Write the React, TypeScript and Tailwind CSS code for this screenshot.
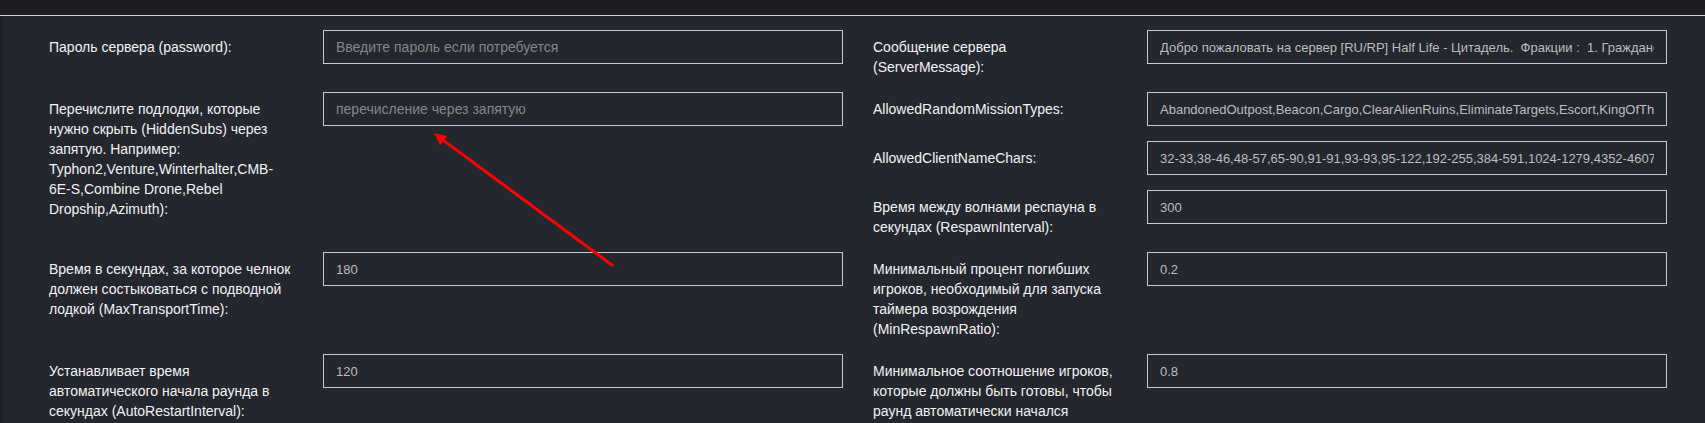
import React from "react";

interface IField {
  label: string;
  value?: string;
  placeholder?: string;
  span?: boolean;
}

const left: IField[] = [
  { label: "Пароль сервера (password):", placeholder: "Введите пароль если потребуется" },
  {
    label:
      "Перечислите подлодки, которые нужно скрыть (HiddenSubs) через запятую. Например: Typhon2,Venture,Winterhalter,CMB-6E-S,Combine Drone,Rebel Dropship,Azimuth):",
    placeholder: "перечисление через запятую",
    span: true,
  },
  { label: "Время в секундах, за которое челнок должен состыковаться с подводной лодкой (MaxTransportTime):", value: "180" },
  { label: "Устанавливает время автоматического начала раунда в секундах (AutoRestartInterval):", value: "120" },
];

const right: IField[] = [
  {
    label: "Сообщение сервера (ServerMessage):",
    value: "Добро пожаловать на сервер [RU/RP] Half Life - Цитадель.  Фракции :  1. Граждане",
  },
  {
    label: "AllowedRandomMissionTypes:",
    value: "AbandonedOutpost,Beacon,Cargo,ClearAlienRuins,EliminateTargets,Escort,KingOfTheHill,Mining,Monster,Nest,Pirate,Salvage",
  },
  {
    label: "AllowedClientNameChars:",
    value: "32-33,38-46,48-57,65-90,91-91,93-93,95-122,192-255,384-591,1024-1279,4352-4607,11904-42191",
  },
  { label: "Время между волнами респауна в секундах (RespawnInterval):", value: "300" },
  {
    label: "Минимальный процент погибших игроков, необходимый для запуска таймера возрождения (MinRespawnRatio):",
    value: "0.2",
  },
  {
    label:
      "Минимальное соотношение игроков, которые должны быть готовы, чтобы раунд автоматически начался (StartWhenClientsReadyRatio):",
    value: "0.8",
  },
];

const Field: React.FC<{ field: IField }> = ({ field }) => {
  return (
    <div className={`flex items-start gap-[29px] ${field.span ? "row-span-3" : ""}`}>
      <label className="w-[245px] shrink-0 pt-[7px] leading-5 text-[#f2f2f2]">{field.label}</label>
      <input
        readOnly
        className="h-[34px] w-[520px] shrink-0 border border-[#c9c9c9] bg-transparent px-[12px] text-[13px] text-[#bdbdbd] outline-none placeholder:text-[14px] placeholder:text-[#868686]"
        placeholder={field.placeholder}
        defaultValue={field.value}
      />
    </div>
  );
};

export default function App() {
  // grid order: left/right pairs, the long HiddenSubs item spans three right rows
  const items: IField[] = [left[0], right[0], left[1], right[1], right[2], right[3], left[2], right[4], left[3], right[5]];

  return (
    <div
      className="relative h-[423px] w-full overflow-hidden bg-[#24272e] text-[14px]"
      style={{ fontFamily: '"Liberation Sans", Arial, sans-serif' }}
    >
      <div className="h-[16px] border-b border-[#d0d0d0] bg-[#1b1d21]" />
      <div className="flex">
        <div className="w-[3px] shrink-0 self-stretch bg-[#1e2125]" />
        <div className="grid grid-cols-[794px_794px] items-start gap-x-[30px] gap-y-[15px] pl-[46px] pt-[14px]">
          {items.map((f, i) => (
            <Field field={f} key={i} />
          ))}
        </div>
      </div>
      <svg className="pointer-events-none absolute left-0 top-0" width="1705" height="423">
        <line x1="612" y1="265" x2="443" y2="140" stroke="#ff0000" strokeWidth="3" strokeLinecap="square" />
        <polygon points="434,133 447,136 440,145" fill="#ff0000" />
      </svg>
    </div>
  );
}
